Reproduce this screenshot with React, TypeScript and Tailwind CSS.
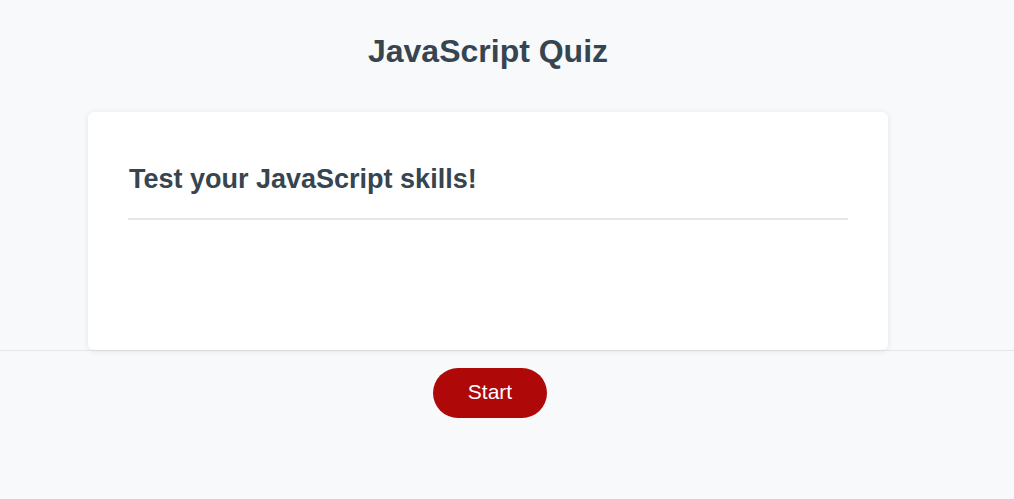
export default function App() {
  return (
    <div
      className="min-h-[499px] w-full bg-[#f8f9fb] text-[#36454f]"
      style={{ fontFamily: '"Liberation Sans", Arial, sans-serif' }}
    >
      <div className="h-[351px] border-b border-[#e6e7ea]">
        <div className="w-[976px] flex flex-col items-center">
          <h1 className="mt-[33px] text-[32px] leading-[37px] font-bold">JavaScript Quiz</h1>
          <div className="mt-[42px] w-[800px] h-[238px] bg-white rounded-[6px] shadow-[0_1px_6px_rgba(0,0,0,0.09)] px-[40px] pt-[52px]">
            <h2 className="pl-[1px] text-[27px] leading-[31px] font-bold">Test your JavaScript skills!</h2>
            <div className="mt-[23px] h-[2px] bg-[#e6e7ea]" />
          </div>
        </div>
      </div>
      <div className="w-[976px] flex justify-center pt-[17px]">
        <button className="ml-[4px] w-[114px] h-[50px] pb-[3px] rounded-full bg-[#ae0808] text-white text-[21px] leading-none">
          Start
        </button>
      </div>
    </div>
  );
}
